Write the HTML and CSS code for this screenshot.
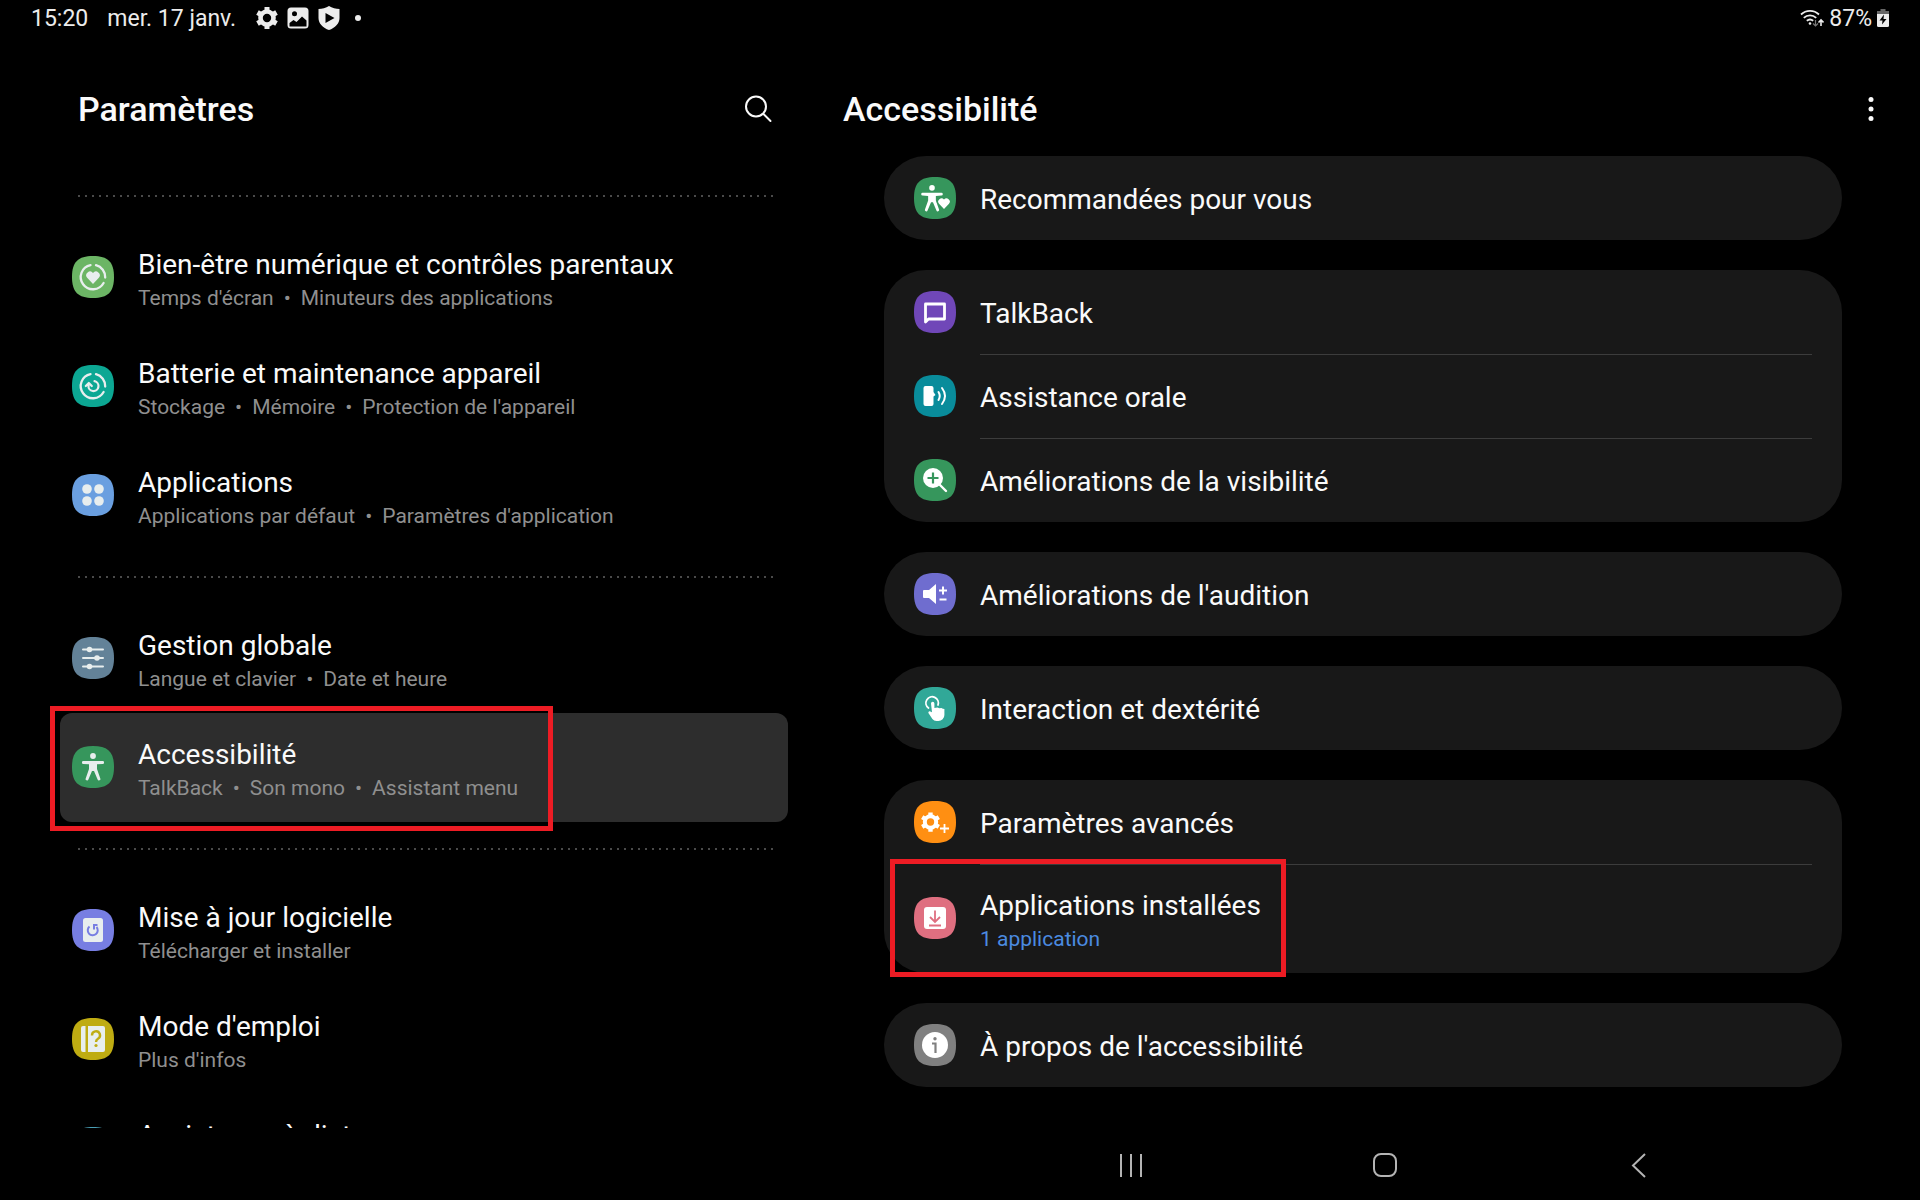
FILE: index.html
```html
<!DOCTYPE html>
<html lang="fr">
<head>
    <meta charset="UTF-8">
    <meta name="viewport" content="width=device-width, initial-scale=1.0">
    <title>Paramètres - Accessibilité</title>
    <link rel="stylesheet" href="styles.css">
</head>
<body>
    <!-- Shared shapes -->
    <svg class="defs" aria-hidden="true">
        <symbol id="tile" viewBox="0 0 42 42">
            <path d="M21 0C36 0 42 6 42 21S36 42 21 42 0 36 0 21 6 0 21 0Z"/>
        </symbol>
        <symbol id="gear" viewBox="0 0 24 24">
            <circle cx="12" cy="12" r="6.5" fill="none" stroke="currentColor" stroke-width="4.6"/>
            <path d="M12 1v4M12 19v4M2.5 6.500l3.400 2M18.100 15.500l3.400 2M2.500 17.500l3.400-2M18.100 8.500l3.400-2" fill="none" stroke="currentColor" stroke-width="5"/>
        </symbol>
        <symbol id="heart" viewBox="0 0 12 11">
            <path d="M6 11L1 5.800A3.100 3.100 0 0 1 6 1.600A3.100 3.100 0 0 1 11 5.800Z" fill="currentColor"/>
        </symbol>
        <symbol id="ring" viewBox="0 0 42 42">
            <path d="M24 9.200A12.200 12.200 0 0 1 33.200 21.500M31.600 27A12.200 12.200 0 1 1 18.500 9.100" fill="none" stroke="currentColor" stroke-width="2.300" stroke-linecap="round"/>
        </symbol>
        <symbol id="person" viewBox="0 0 22 28">
            <circle cx="11" cy="3" r="2.900" fill="currentColor"/>
            <path d="M1.200 8.100h19.600a1.200 1.200 0 0 1 0 2.800L15 11.300V16l3.300 9.500a1.400 1.400 0 0 1-2.700 1L12 18h-2l-3.600 8.500a1.400 1.400 0 0 1-2.700-1L7 16v-4.700L1.200 10.900a1.200 1.200 0 0 1 0-2.800Z" fill="currentColor"/>
        </symbol>
    </svg>

    <div class="status-bar">
        <span>15:20</span>
        <span class="date">mer. 17 janv.</span>
        <svg class="status-icon" viewBox="0 0 24 24"><use href="#gear"/></svg>
        <svg class="status-icon" viewBox="0 0 24 24">
            <path fill-rule="evenodd" fill="currentColor" d="M5 1.500h14a3.500 3.500 0 0 1 3.500 3.500v14a3.500 3.500 0 0 1-3.500 3.500H5A3.500 3.500 0 0 1 1.500 19V5A3.500 3.500 0 0 1 5 1.500ZM8.500 5.300a2.500 2.500 0 1 0 0 5 2.500 2.500 0 0 0 0-5ZM3.500 17v3.500h17v-6l-4.500-4-5.500 5.500-3-2Z"/>
        </svg>
        <svg class="status-icon" viewBox="0 0 24 24">
            <path fill-rule="evenodd" fill="currentColor" d="M12 0c3 2 7 3 10.500 3v9c0 5.500-4.500 10-10.500 12C6 22 1.500 17.500 1.500 12V3C5 3 9 2 12 0ZM8.500 7v10l9-5Z"/>
        </svg>
        <span class="dot"></span>
        <div class="status-right">
            <svg class="wifi" viewBox="0 0 24 20">
                <g fill="none" stroke="currentColor" stroke-width="1.800">
                    <path d="M1 6.500a13 13 0 0 1 18 0M3.800 9.800a9 9 0 0 1 12.400 0M6.800 12.800a5 5 0 0 1 6.400 0"/>
                </g>
                <circle cx="10" cy="15.500" r="1.300" fill="currentColor"/>
                <path d="M15.500 12v6M13 15.500l2.500 2.500 2.500-2.500" fill="none" stroke="#777" stroke-width="1.200"/>
                <path d="M21 18v-6M18.500 14.500L21 12l2.500 2.500" fill="none" stroke="currentColor" stroke-width="1.600"/>
            </svg>
            <span>87%</span>
            <svg class="battery" viewBox="0 0 12 18">
                <path fill="#666" d="M3.500 0h5v2H12v4H0V2h3.500Z"/>
                <path fill="currentColor" d="M0 5h12v11.500a1.500 1.500 0 0 1-1.500 1.500h-9A1.500 1.500 0 0 1 0 16.500Z"/>
                <path fill="#000" d="M7 5.500L2.500 11.500h3L5 15.500l4.500-5.500h-3Z"/>
            </svg>
        </div>
    </div>

    <div class="panes">
        <section class="pane pane-left">
            <header class="pane-header">
                <h1>Paramètres</h1>
                <button class="icon-button" type="button" aria-label="Rechercher">
                    <svg width="30" height="30" viewBox="0 0 30 30" fill="none" stroke="currentColor" stroke-width="2" stroke-linecap="round">
                        <circle cx="13" cy="12.500" r="10"/>
                        <path d="M20.500 20l7 7"/>
                    </svg>
                </button>
            </header>

            <nav class="settings">
                <hr>
                <a class="row" href="#bien-etre">
                    <svg class="icon" viewBox="0 0 42 42">
                        <use href="#tile" fill="#6cb565"/>
                        <use href="#ring"/>
                        <use href="#heart" x="14" y="15" width="14" height="13"/>
                    </svg>
                    <span class="text">
                        <span class="title">Bien-être numérique et contrôles parentaux</span>
                        <span class="sub">Temps d'écran<i>•</i>Minuteurs des applications</span>
                    </span>
                </a>
                <a class="row" href="#batterie">
                    <svg class="icon" viewBox="0 0 42 42">
                        <use href="#tile" fill="#0ca793"/>
                        <use href="#ring"/>
                        <path d="M16.500 20.500a5 5 0 1 0 6-4.300M13.800 21l3-3 3 3" fill="none" stroke="currentColor" stroke-width="2.200" stroke-linecap="round" stroke-linejoin="round"/>
                    </svg>
                    <span class="text">
                        <span class="title">Batterie et maintenance appareil</span>
                        <span class="sub">Stockage<i>•</i>Mémoire<i>•</i>Protection de l'appareil</span>
                    </span>
                </a>
                <a class="row" href="#applications">
                    <svg class="icon" viewBox="0 0 42 42">
                        <use href="#tile" fill="#6a9fe0"/>
                        <g fill="currentColor">
                            <circle cx="15" cy="15" r="4.800"/>
                            <circle cx="27" cy="15" r="4.800"/>
                            <circle cx="15" cy="27" r="4.800"/>
                            <circle cx="27" cy="27" r="4.800"/>
                        </g>
                    </svg>
                    <span class="text">
                        <span class="title">Applications</span>
                        <span class="sub">Applications par défaut<i>•</i>Paramètres d'application</span>
                    </span>
                </a>
                <hr>
                <a class="row" href="#gestion">
                    <svg class="icon" viewBox="0 0 42 42">
                        <use href="#tile" fill="#638298"/>
                        <path d="M11 12.500h20M11 21h20M11 29.500h20" stroke="currentColor" stroke-width="2" stroke-linecap="round"/>
                        <g fill="currentColor">
                            <circle cx="17.500" cy="12.500" r="2.800"/>
                            <circle cx="25" cy="21" r="2.800"/>
                            <circle cx="17.500" cy="29.500" r="2.800"/>
                        </g>
                    </svg>
                    <span class="text">
                        <span class="title">Gestion globale</span>
                        <span class="sub">Langue et clavier<i>•</i>Date et heure</span>
                    </span>
                </a>
                <a class="row selected" href="#accessibilite" aria-current="page">
                    <svg class="icon" viewBox="0 0 42 42">
                        <use href="#tile" fill="#36965c"/>
                        <use href="#person" x="10" y="7" width="22" height="28"/>
                    </svg>
                    <span class="text">
                        <span class="title">Accessibilité</span>
                        <span class="sub">TalkBack<i>•</i>Son mono<i>•</i>Assistant menu</span>
                    </span>
                    <span class="highlight highlight-menu"></span>
                </a>
                <hr>
                <a class="row" href="#mise-a-jour">
                    <svg class="icon" viewBox="0 0 42 42">
                        <use href="#tile" fill="#777ee2"/>
                        <rect x="11" y="9" width="20" height="24" rx="2.500" fill="currentColor"/>
                        <path d="M17.500 17.500a5 5 0 1 0 7 .5M25.500 16H22v4.500" fill="none" stroke="#777ee2" stroke-width="2"/>
                    </svg>
                    <span class="text">
                        <span class="title">Mise à jour logicielle</span>
                        <span class="sub">Télécharger et installer</span>
                    </span>
                </a>
                <a class="row" href="#mode-emploi">
                    <svg class="icon" viewBox="0 0 42 42">
                        <use href="#tile" fill="#bfac12"/>
                        <path d="M11 8h2.500v26H11a2 2 0 0 1-2-2V10a2 2 0 0 1 2-2ZM16 8h15a2 2 0 0 1 2 2v22a2 2 0 0 1-2 2H16Z" fill="currentColor"/>
                        <path d="M20 17.500a4 4 0 1 1 6 3.200q-2 1.200-2 3.300" fill="none" stroke="#bfac12" stroke-width="2.400"/>
                        <circle cx="24" cy="27.500" r="1.600" fill="#bfac12"/>
                    </svg>
                    <span class="text">
                        <span class="title">Mode d'emploi</span>
                        <span class="sub">Plus d'infos</span>
                    </span>
                </a>
                <a class="row" href="#assistance">
                    <svg class="icon" viewBox="0 0 42 42">
                        <use href="#tile" fill="#4a9fb5"/>
                    </svg>
                    <span class="text">
                        <span class="title">Assistance à distance</span>
                        <span class="sub">&nbsp;</span>
                    </span>
                </a>
            </nav>
        </section>

        <main class="pane pane-right">
            <header class="pane-header">
                <h1>Accessibilité</h1>
                <button class="icon-button" type="button" aria-label="Plus d'options">
                    <svg width="30" height="30" viewBox="0 0 30 30" fill="currentColor">
                        <circle cx="15" cy="5.500" r="2.500"/>
                        <circle cx="15" cy="15" r="2.500"/>
                        <circle cx="15" cy="24.500" r="2.500"/>
                    </svg>
                </button>
            </header>

            <div class="cards">
                <div class="card">
                    <a class="item" href="#recommandees">
                        <svg class="icon" viewBox="0 0 42 42">
                            <use href="#tile" fill="#36965c"/>
                            <use href="#person" x="7" y="8" width="22" height="27"/>
                            <path d="M30 33L23 26a4.500 4.500 0 0 1 7-5 4.500 4.500 0 0 1 7 5Z" fill="#36965c"/>
                            <use href="#heart" x="24" y="21" width="12" height="11"/>
                        </svg>
                        <span class="title">Recommandées pour vous</span>
                    </a>
                </div>

                <div class="card">
                    <a class="item" href="#talkback">
                        <svg class="icon" viewBox="0 0 42 42">
                            <use href="#tile" fill="#7047b8"/>
                            <path d="M11.500 13h19v15h-16l-3 3Z" fill="none" stroke="currentColor" stroke-width="2.800" stroke-linejoin="round"/>
                        </svg>
                        <span class="title">TalkBack</span>
                    </a>
                    <a class="item" href="#assistance-orale">
                        <svg class="icon" viewBox="0 0 42 42">
                            <use href="#tile" fill="#098c9b"/>
                            <path d="M11.500 11h6a2 2 0 0 1 2 2v4l2 3-2 1.500V29a2 2 0 0 1-2 2h-6a2 2 0 0 1-2-2V13a2 2 0 0 1 2-2Z" fill="currentColor"/>
                            <path d="M24.500 17q2.500 4 0 8M28 13q6 8 0 16" fill="none" stroke="currentColor" stroke-width="2" stroke-linecap="round"/>
                        </svg>
                        <span class="title">Assistance orale</span>
                    </a>
                    <a class="item" href="#visibilite">
                        <svg class="icon" viewBox="0 0 42 42">
                            <use href="#tile" fill="#36965c"/>
                            <circle cx="19" cy="19" r="10" fill="currentColor"/>
                            <path d="M25 25l7 7" stroke="currentColor" stroke-width="2.400" stroke-linecap="round"/>
                            <path d="M19 13.500v11M13.500 19h11" stroke="#36965c" stroke-width="2.200"/>
                        </svg>
                        <span class="title">Améliorations de la visibilité</span>
                    </a>
                </div>

                <div class="card">
                    <a class="item" href="#audition">
                        <svg class="icon" viewBox="0 0 42 42">
                            <use href="#tile" fill="#6f6dcf"/>
                            <path d="M10 17h5l7-6v20l-7-6h-5a1 1 0 0 1-1-1v-6a1 1 0 0 1 1-1Z" fill="currentColor"/>
                            <path d="M29 13.500v8M25 17.500h8M25.500 26.500h7" stroke="currentColor" stroke-width="2"/>
                        </svg>
                        <span class="title">Améliorations de l'audition</span>
                    </a>
                </div>

                <div class="card">
                    <a class="item" href="#interaction">
                        <svg class="icon" viewBox="0 0 42 42">
                            <use href="#tile" fill="#31a898"/>
                            <path d="M14.500 21a6.200 6.200 0 1 1 9.500-3" fill="none" stroke="currentColor" stroke-width="1.800" stroke-linecap="round"/>
                            <path d="M17 16.500a1.700 1.700 0 0 1 3.400 0V21l3-.5 2 .8 2-.3 1.500.8 1.500.2V28a6 6 0 0 1-6 6h-2a5 5 0 0 1-4-2l-4-6a1.400 1.400 0 0 1 2-1.600l1.600.8Z" fill="currentColor"/>
                        </svg>
                        <span class="title">Interaction et dextérité</span>
                    </a>
                </div>

                <div class="card">
                    <a class="item" href="#avances">
                        <svg class="icon" viewBox="0 0 42 42">
                            <use href="#tile" fill="#ff8f12"/>
                            <use href="#gear" x="6" y="10.500" width="21" height="21"/>
                            <path d="M30.500 23v9M26 27.500h9" stroke="currentColor" stroke-width="1.800"/>
                        </svg>
                        <span class="title">Paramètres avancés</span>
                    </a>
                    <a class="item tall" href="#installees">
                        <svg class="icon" viewBox="0 0 42 42">
                            <use href="#tile" fill="#df6f80"/>
                            <rect x="10" y="10" width="22" height="22" rx="3" fill="currentColor"/>
                            <path d="M21 13.500v11M16 20l5 5 5-5M15 28.500h12" fill="none" stroke="#df6f80" stroke-width="1.800"/>
                        </svg>
                        <span class="text">
                            <span class="title">Applications installées</span>
                            <span class="sub link">1 application</span>
                        </span>
                        <span class="highlight highlight-apps"></span>
                    </a>
                </div>

                <div class="card">
                    <a class="item" href="#a-propos">
                        <svg class="icon" viewBox="0 0 42 42">
                            <use href="#tile" fill="#808080"/>
                            <circle cx="21" cy="21" r="13" fill="currentColor"/>
                            <circle cx="21" cy="14.800" r="1.700" fill="#808080"/>
                            <path d="M18 19.500h3.500V29" fill="none" stroke="#808080" stroke-width="2.200"/>
                        </svg>
                        <span class="title">À propos de l'accessibilité</span>
                    </a>
                </div>
            </div>
        </main>
    </div>

    <footer class="nav-bar">
        <button class="nav-button" type="button" aria-label="Applications récentes">
            <svg width="28" height="28" viewBox="0 0 28 28" fill="none" stroke="currentColor" stroke-width="2">
                <path d="M4 3v23M14 3v23M24 3v23"/>
            </svg>
        </button>
        <button class="nav-button" type="button" aria-label="Accueil">
            <svg width="28" height="28" viewBox="0 0 28 28" fill="none" stroke="currentColor" stroke-width="2">
                <rect x="3" y="3" width="22" height="22" rx="7"/>
            </svg>
        </button>
        <button class="nav-button" type="button" aria-label="Retour">
            <svg width="28" height="28" viewBox="0 0 28 28" fill="none" stroke="currentColor" stroke-width="2">
                <path d="M20 3L8 14.500 20 26"/>
            </svg>
        </button>
    </footer>
</body>
</html>
```
FILE: styles.css
```css
* {
    box-sizing: border-box;
}
body {
    display: flex;
    flex-direction: column;
    height: 100vh;
    margin: 0;
    overflow: hidden;
    background: #000;
    color: #fafafa;
    font-family: Roboto, sans-serif;
}
a {
    color: inherit;
    text-decoration: none;
}
button {
    display: flex;
    align-items: center;
    justify-content: center;
    padding: 0;
    border: 0;
    background: none;
    color: inherit;
}
.defs {
    position: absolute;
    width: 0;
    height: 0;
}

/* Status bar */
.status-bar {
    display: flex;
    align-items: center;
    gap: 7px;
    height: 36px;
    padding: 0 31px;
    color: #ececec;
    font-size: 23px;
}
.date {
    margin: 0 12px;
}
.status-icon {
    width: 24px;
    height: 24px;
}
.dot {
    width: 6px;
    height: 6px;
    margin-left: 7px;
    border-radius: 50%;
    background: #ececec;
}
.status-right {
    display: flex;
    align-items: center;
    gap: 5px;
    margin-left: auto;
}
.wifi {
    width: 24px;
    height: 20px;
}
.battery {
    width: 12px;
    height: 18px;
}

/* Two panes */
.panes {
    display: grid;
    grid-template-columns: 404fr 556fr;
    flex: 1;
    min-height: 0;
}
.pane {
    display: flex;
    flex-direction: column;
    min-width: 0;
    min-height: 0;
    overflow: hidden;
}
.pane-header {
    display: flex;
    align-items: center;
    justify-content: space-between;
    flex: none;
    height: 120px;
}
.pane-left .pane-header {
    height: 133px;
    padding: 12px 35px 0 78px;
}
.pane-right .pane-header {
    padding: 25px 34px 0 35px;
}
h1 {
    margin: 0;
    font-size: 34px;
    font-weight: 500;
    line-height: 40px;
}
.icon-button {
    width: 30px;
    height: 30px;
}

/* Settings list */
.settings {
    padding: 0 20px 0 60px;
}
hr {
    height: 2px;
    margin: 26px 12px 26px 18px;
    border: 0;
    background: repeating-linear-gradient(90deg, #4a4a4a 0 2px, transparent 2px 7px);
}
.row {
    position: relative;
    display: flex;
    align-items: center;
    gap: 24px;
    height: 109px;
    padding: 0 0 2px 12px;
    border-radius: 12px;
}
.selected {
    background: #2d2d2d;
}
.icon {
    flex: none;
    width: 42px;
    height: 42px;
    color: #fff;
}
.row .icon {
    color: #e8eeee;
}
.text {
    display: flex;
    flex-direction: column;
    padding-top: 2px;
}
.title {
    padding-top: 4px;
    font-size: 28px;
    line-height: 36px;
    white-space: nowrap;
}
.sub {
    color: #8f8f8f;
    font-size: 21px;
    line-height: 30px;
    white-space: nowrap;
}
.sub i {
    margin: 0 10px;
    font-style: normal;
}
.link {
    color: #4b8be0;
}

/* Accessibility cards */
.cards {
    display: flex;
    flex-direction: column;
    gap: 30px;
    padding: 0 78px 0 76px;
}
.card {
    border-radius: 42px;
    background: #181818;
}
.item {
    position: relative;
    display: flex;
    align-items: center;
    gap: 24px;
    height: 84px;
    padding: 0 30px;
}
.tall {
    height: 109px;
    padding-bottom: 2px;
}
/* separator starts under the label, not under the icon */
.item + .item::before {
    content: "";
    position: absolute;
    top: 0;
    right: 30px;
    left: 96px;
    height: 1px;
    background: #3c3c3c;
}

/* Red call-outs */
.highlight {
    position: absolute;
    border: 5px solid #ed1c24;
}
.highlight-menu {
    top: -7px;
    bottom: -9px;
    left: -10px;
    width: 503px;
}
.highlight-apps {
    top: -5px;
    bottom: -4px;
    left: 6px;
    width: 396px;
}

/* Navigation bar */
.nav-bar {
    display: flex;
    align-items: center;
    justify-content: flex-end;
    gap: 206px;
    height: 72px;
    padding: 2px 257px 0 0;
    color: #b4b4b4;
}
.nav-button {
    width: 48px;
    height: 48px;
}
```
